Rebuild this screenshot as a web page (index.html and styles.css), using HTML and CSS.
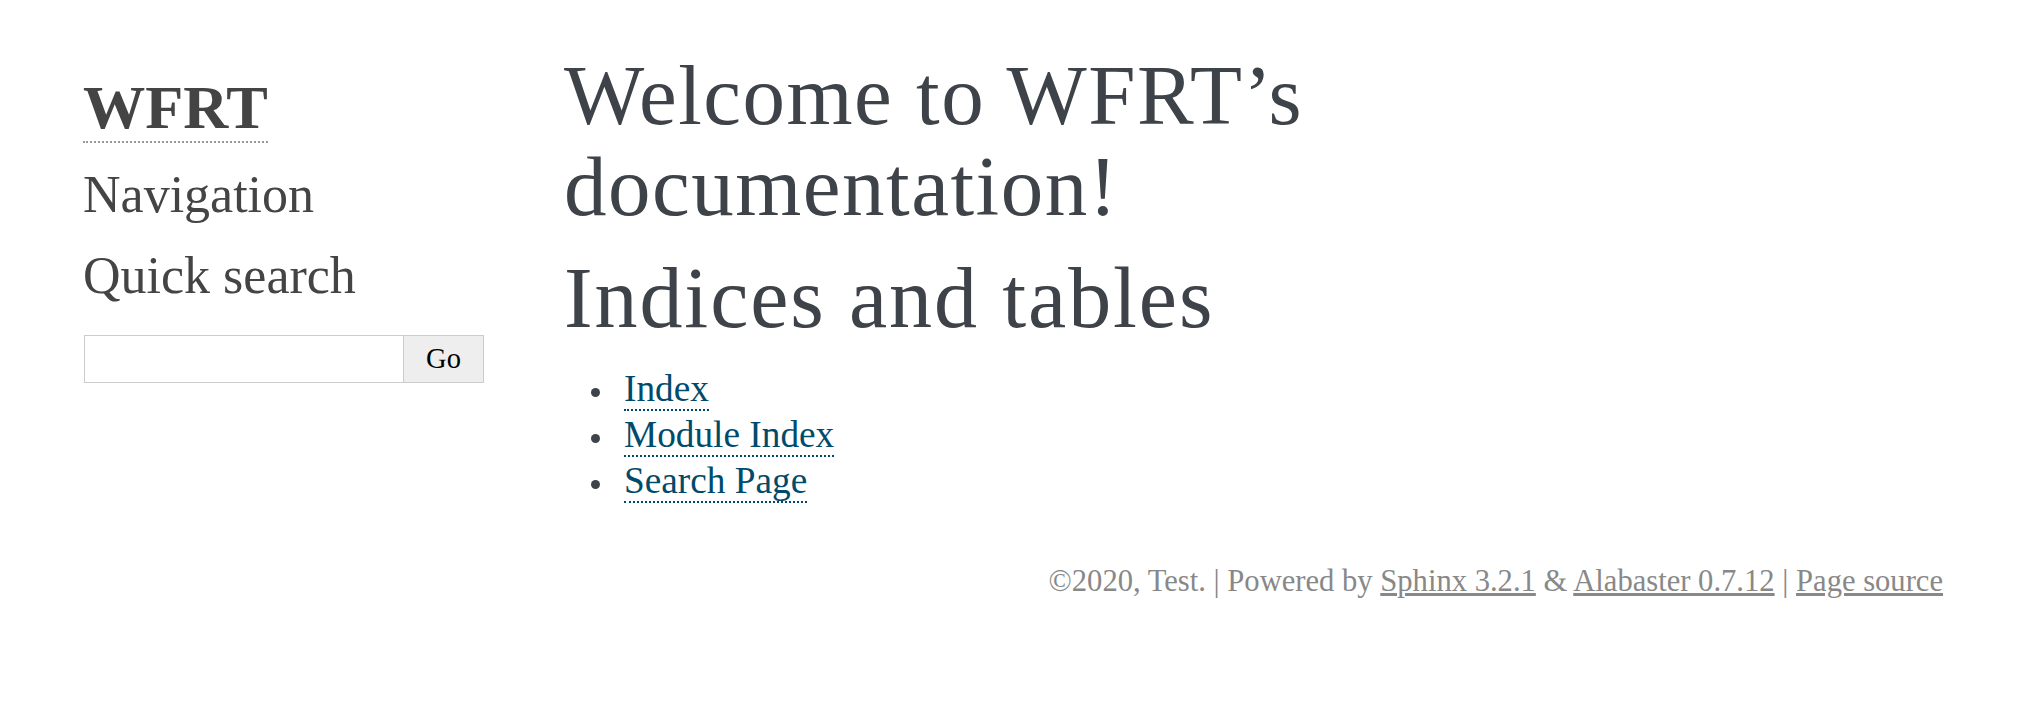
FILE: index.html
```html
<!DOCTYPE html>
<html lang="en">
<head>
<meta charset="utf-8">
<title>Welcome to WFRT’s documentation! — WFRT documentation</title>
<link rel="stylesheet" href="styles.css">
</head>
<body>
<div class="document">
  <div class="sidebar">
    <h1 class="logo"><a href="#">WFRT</a></h1>
    <h3 class="side-title">Navigation</h3>
    <h3 class="side-title second">Quick search</h3>
    <form class="searchbox" onsubmit="return false;">
      <input class="search-input" type="text" name="q" aria-label="search">
      <button class="search-go" type="submit">Go</button>
    </form>
  </div>
  <div class="main">
    <h1 class="title">Welcome to WFRT’s documentation!</h1>
    <h2 class="subtitle">Indices and tables</h2>
    <ul class="links">
      <li><a class="ref" href="#">Index</a></li>
      <li><a class="ref" href="#">Module Index</a></li>
      <li><a class="ref" href="#">Search Page</a></li>
    </ul>
  </div>
</div>
<div class="footer">©2020, Test. | Powered by <a href="#">Sphinx 3.2.1</a> &amp; <a href="#">Alabaster 0.7.12</a> | <a href="#">Page source</a></div>
</body>
</html>
```

FILE: styles.css
```css
html, body {
  margin: 0;
  padding: 0;
  background: #ffffff;
}
body {
  font-family: "Liberation Serif", "Times New Roman", serif;
  color: #3E4349;
}
.document {
  display: flex;
  padding-left: 83px;
}
.sidebar {
  width: 481px;
  flex: none;
  padding-top: 76px;
  color: #444;
}
.logo {
  margin: 0;
  font-size: 62.3px;
  line-height: 61px;
  font-weight: bold;
}
.logo a {
  color: #444;
  text-decoration: none;
  border-bottom: 2px dotted #999;
}
.side-title {
  margin: 31.5px 0 0;
  font-size: 52px;
  line-height: 52px;
  font-weight: normal;
  color: #444;
}
.side-title.second {
  margin-top: 29px;
}
.searchbox {
  display: flex;
  margin: 33.5px 0 0 1px;
  height: 48px;
}
.search-input {
  box-sizing: border-box;
  width: 320px;
  height: 48px;
  margin: 0;
  padding: 0 8px;
  border: 1px solid #ccc;
  background: #fff;
  outline: none;
}
.search-go {
  box-sizing: border-box;
  width: 80px;
  height: 48px;
  margin: 0;
  padding: 0;
  border: 1px solid #ccc;
  border-left: none;
  background: #eeeeee;
  color: #000;
  font-family: "Liberation Serif", "Times New Roman", serif;
  font-size: 28.5px;
}
.main {
  width: 900px;
  padding-top: 50px;
}
.title {
  margin: 0;
  font-size: 85px;
  line-height: 91px;
  font-weight: normal;
  letter-spacing: 1.5px;
  color: #3E4349;
}
.subtitle {
  margin: 20.5px 0 0;
  font-size: 86px;
  line-height: 91px;
  font-weight: normal;
  letter-spacing: 1.9px;
  color: #3E4349;
}
.links {
  margin: 22px 0 0;
  padding-left: 27px;
  list-style: none;
  font-size: 37.3px;
  line-height: 46px;
}
.links li::before {
  content: "";
  display: inline-block;
  width: 9px;
  height: 9px;
  border-radius: 50%;
  background: #3E4349;
  margin: 0 24px 4px 0;
  vertical-align: baseline;
}
.ref {
  color: #004B6B;
  text-decoration: none;
  border-bottom: 2px dotted #004B6B;
}
.footer {
  margin-top: 57px;
  padding-right: 95px;
  text-align: right;
  font-size: 30.6px;
  line-height: 40px;
  color: #888;
}
.footer a {
  color: #888;
  text-decoration: underline;
}
```
